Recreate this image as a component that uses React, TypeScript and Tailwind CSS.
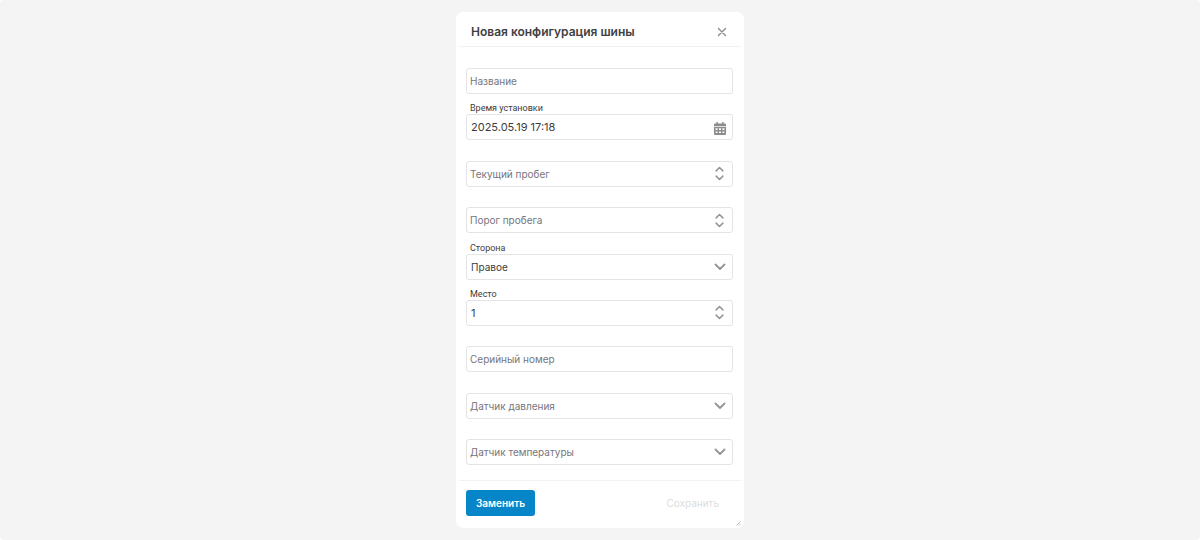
import { useState } from "react";
import type { ReactNode } from "react";

const inputClass =
  "h-[26px] w-full appearance-none rounded-[3px] border border-[#e4e4e6] bg-white pl-1 pr-8 leading-4 text-[#3c3c3e] outline-none";

// The label lies inside the box while the field is empty and moves above it once filled.
function Field({ id, label, filled, children }: { id: string; label: string; filled?: boolean; children: ReactNode }) {
  return (
    <div className="relative pt-5">
      <label
        htmlFor={id}
        className={
          filled
            ? "absolute left-1 top-2 font-['Roboto',sans-serif] text-[9px] leading-3 text-[#3c3c3e]"
            : "pointer-events-none absolute left-1 top-[25px] z-10 text-[10px] leading-4 text-[#76767c]"
        }
      >
        {label}
      </label>
      <div className="relative flex">{children}</div>
    </div>
  );
}

function Chevron({ up, small }: { up?: boolean; small?: boolean }) {
  return (
    <svg
      viewBox="0 0 12 8"
      className={small ? "h-[6px] w-[9px]" : "h-[8px] w-[12px]"}
      fill="none"
      stroke="currentColor"
      strokeWidth={small ? 2 : 1.8}
      strokeLinecap="round"
      strokeLinejoin="round"
      aria-hidden="true"
    >
      <path d={up ? "M1.5 6.5 6 2l4.5 4.5" : "M1.5 1.5 6 6l4.5-4.5"} />
    </svg>
  );
}

function CalendarIcon() {
  return (
    <svg viewBox="0 0 12 13" className="h-[13px] w-[12px]" fill="currentColor" aria-hidden="true">
      <path d="M2.5 0h1.4v1.5h4.2V0h1.4v1.5H11a1 1 0 0 1 1 1V4H0V2.5a1 1 0 0 1 1-1h1.5z" />
      <path
        fillRule="evenodd"
        d="M0 4.7h12V12a1 1 0 0 1-1 1H1a1 1 0 0 1-1-1zM1.6 6.2v1.7h2V6.2zM5 6.2v1.7h2V6.2zM8.4 6.2v1.7h2V6.2zM1.6 9.4v1.7h2V9.4zM5 9.4v1.7h2V9.4zM8.4 9.4v1.7h2V9.4z"
      />
    </svg>
  );
}

function TextField({ id, label }: { id: string; label: string }) {
  const [value, setValue] = useState("");

  return (
    <Field id={id} label={label} filled={value !== ""}>
      <input
        id={id}
        type="text"
        value={value}
        onChange={(e) => setValue(e.target.value)}
        className={`${inputClass} text-[10px]`}
      />
    </Field>
  );
}

function NumberField({ id, label, initial = "" }: { id: string; label: string; initial?: string }) {
  const [value, setValue] = useState(initial);
  const step = (n: number) => setValue(String((Number(value) || 0) + n));

  return (
    <Field id={id} label={label} filled={value !== ""}>
      <input
        id={id}
        type="text"
        inputMode="numeric"
        value={value}
        onChange={(e) => setValue(e.target.value)}
        className={`${inputClass} text-[11px]`}
      />
      <div className="absolute inset-y-0 right-[9px] flex flex-col items-center justify-center gap-[3px] text-[#949496]">
        <button type="button" aria-label="Увеличить" onClick={() => step(1)}>
          <Chevron up small />
        </button>
        <button type="button" aria-label="Уменьшить" onClick={() => step(-1)}>
          <Chevron small />
        </button>
      </div>
    </Field>
  );
}

function SelectField({ id, label, options, initial = "" }: { id: string; label: string; options: string[]; initial?: string }) {
  const [value, setValue] = useState(initial);

  return (
    <Field id={id} label={label} filled={value !== ""}>
      <select
        id={id}
        value={value}
        onChange={(e) => setValue(e.target.value)}
        className={`${inputClass} text-[10px]`}
      >
        {initial === "" && <option value=""></option>}
        {options.map((o) => (
          <option key={o} value={o}>
            {o}
          </option>
        ))}
      </select>
      <span className="pointer-events-none absolute inset-y-0 right-[7px] flex items-center text-[#949496]">
        <Chevron />
      </span>
    </Field>
  );
}

export default function App() {
  return (
    <div className="bg-white font-['Inter',sans-serif]">
      <main className="flex min-h-screen justify-center rounded-[4px] bg-[#f4f4f4] py-3">
        <form
          role="dialog"
          aria-labelledby="title"
          onSubmit={(e) => e.preventDefault()}
          className="flex w-full max-w-[288px] flex-col rounded-[7px] bg-white px-[3px]"
        >
          <header className="flex h-[35px] items-center justify-between border-b border-[#f2f2f2] pl-3 pr-[14px] pt-[6px]">
            <h1 id="title" className="text-[12px] leading-5 font-semibold text-[#404042]">
              Новая конфигурация шины
            </h1>
            <button type="button" aria-label="Закрыть" className="text-[#8c8c8e]">
              <svg viewBox="0 0 10 10" className="size-[10px]" fill="none" stroke="currentColor" strokeWidth="1.4" strokeLinecap="round">
                <path d="M1.5 1.5l7 7M8.5 1.5l-7 7" />
              </svg>
            </button>
          </header>

          <div className="flex flex-1 flex-col justify-between pl-[7px] pr-2 pt-[1px] pb-[15px]">
            <TextField id="name" label="Название" />
            <Field id="installed" label="Время установки" filled>
              <input
                id="installed"
                type="text"
                defaultValue="2025.05.19 17:18"
                className={`${inputClass} text-[11px]`}
              />
              <button type="button" aria-label="Открыть календарь" className="absolute right-[7px] top-[8px] text-[#8c8c8e]">
                <CalendarIcon />
              </button>
            </Field>
            <NumberField id="mileage" label="Текущий пробег" />
            <NumberField id="threshold" label="Порог пробега" />
            <SelectField id="side" label="Сторона" options={["Правое", "Левое"]} initial="Правое" />
            <NumberField id="place" label="Место" initial="1" />
            <TextField id="serial" label="Серийный номер" />
            <SelectField id="pressure" label="Датчик давления" options={[]} />
            <SelectField id="temperature" label="Датчик температуры" options={[]} />
          </div>

          <footer className="relative flex h-12 items-start justify-between border-t border-[#f2f2f2] px-[7px] pt-[9px]">
            <button type="button" className="h-[26px] rounded-[3px] bg-[#0685c9] px-[10px] text-[10px] leading-4 font-semibold text-white">
              Заменить
            </button>
            <button type="submit" disabled className="h-[26px] px-[15px] text-[10px] leading-4 text-[#dcdcde]">
              Сохранить
            </button>
            <svg viewBox="0 0 5 5" className="absolute right-0 bottom-[2px] size-[5px]" stroke="#9c9c9e" strokeWidth="0.7" aria-hidden="true">
              <path d="M0.5 4.5l4-4M3 4.5l1.5-1.5" />
            </svg>
          </footer>
        </form>
      </main>
    </div>
  );
}
